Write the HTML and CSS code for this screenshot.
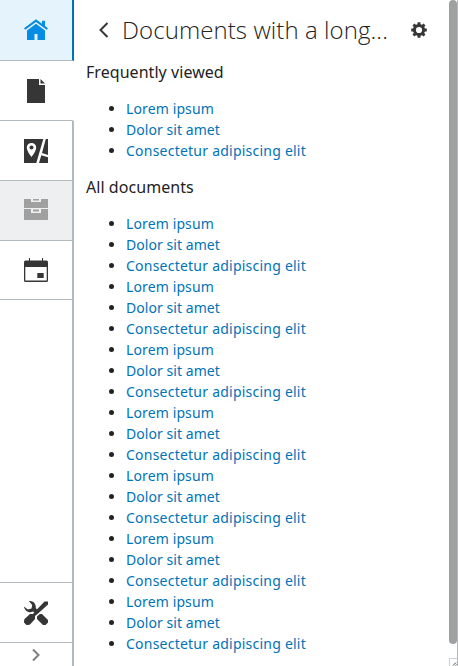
FILE: index.html
```html
<!DOCTYPE html>
<html lang="en">
<head>
<meta charset="utf-8">
<title>Documents</title>
<link rel="stylesheet" href="styles.css">
</head>
<body>
<div class="app">
  <nav class="rail">
    <a class="item item-home"><svg width="24" height="24" viewBox="0 0 24 24"><path d="M0 10.200 12 1.200l6 4.500V2.800h3v5.100l3 2.300-1.300 1.500L12 3.900 1.300 11.700zM12 5.800l9 6.800V22h-7.500v-6h-3v6H3v-9.400z"/></svg></a>
    <a class="item item-active"><svg width="24" height="24" viewBox="0 0 24 24"><path d="M3 0h12v6h6v18H3zM16.500 0 21 4.500h-4.500z"/></svg></a>
    <a class="item"><svg width="24" height="24" viewBox="0 0 24 24"><path d="M0 0h19.300L12.300 24H0zM21.800 0H24v15.900l-6-1.800zM17.300 16.300l6.700 2V24h-9z"/><path class="cut" d="M7.500 4A4.600 4.600 0 0 0 2.800 8.700C2.800 12 7.500 18 7.500 18s4.700-6 4.700-9.300A4.600 4.600 0 0 0 7.500 4z"/><circle cx="7.500" cy="8.600" r="2"/></svg></a>
    <a class="item item-disabled"><svg width="24" height="24" viewBox="0 0 24 24"><path d="M0 0h7v3h10V0h7v9H0zM9 0h6v1.500H9zM0 10h7v4h10v-4h7v11H0zM9 10.500h6v2H9z"/></svg></a>
    <a class="item item-calendar"><svg width="24" height="24" viewBox="0 0 24 24"><path fill-rule="evenodd" d="M5 0h1v2.500h12V0h1v2.500h3.500Q24 2.500 24 4v18.500q0 1.500-1.500 1.500h-21Q0 24 0 22.500V4Q0 2.500 1.500 2.500H5zM1.300 9v13.600h21.400V9zM13.300 15h6.400v5h-6.400z"/></svg></a>
    <div class="spacer"></div>
    <a class="item item-tools"><svg width="24" height="24" viewBox="0 0 24 24"><path d="M24 .500v3L13.500 13 11 15v3l-5 5.500-2 .5H2.500L0 21.500V20l.5-2L6 13h3L10.500 11 20.500.500zM5 .200C9 -.5 12.200 3 11.800 7L13 8.500 10.200 11.300 8.800 10.600C5 12.500.500 10 0 5.500l3.800 3L7.500 7.500 8.200 4zM15.800 13H18l6 6v2.500L21.500 24H19l-6-6v-2.500z"/></svg></a>
    <a class="expand"><svg width="10" height="14" viewBox="0 0 10 14"><path d="m2 1.500 5.500 5.500L2 12.500"/></svg></a>
  </nav>
  <main class="panel">
    <header class="header">
      <svg class="back" width="12" height="18" viewBox="0 0 12 18"><path d="M9.500 2 2.500 9l7 7"/></svg>
      <h1>Documents with a long...</h1>
      <svg class="gear" width="16" height="16" viewBox="-8 -8 16 16"><circle r="4.600"/><g><path id="tooth" d="M-1.600-4.500-1.400-7.800h2.800l.2 3.300zM-1.600 4.500-1.400 7.800h2.800l.2-3.300z"/><use href="#tooth" transform="rotate(45)"/><use href="#tooth" transform="rotate(90)"/><use href="#tooth" transform="rotate(135)"/></g></svg>
    </header>
    <h2>Frequently viewed</h2>
    <ul>
      <li><a>Lorem ipsum</a></li><li><a>Dolor sit amet</a></li><li><a>Consectetur adipiscing elit</a></li>
    </ul>
    <h2>All documents</h2>
    <ul>
      <li><a>Lorem ipsum</a></li><li><a>Dolor sit amet</a></li><li><a>Consectetur adipiscing elit</a></li>
      <li><a>Lorem ipsum</a></li><li><a>Dolor sit amet</a></li><li><a>Consectetur adipiscing elit</a></li>
      <li><a>Lorem ipsum</a></li><li><a>Dolor sit amet</a></li><li><a>Consectetur adipiscing elit</a></li>
      <li><a>Lorem ipsum</a></li><li><a>Dolor sit amet</a></li><li><a>Consectetur adipiscing elit</a></li>
      <li><a>Lorem ipsum</a></li><li><a>Dolor sit amet</a></li><li><a>Consectetur adipiscing elit</a></li>
      <li><a>Lorem ipsum</a></li><li><a>Dolor sit amet</a></li><li><a>Consectetur adipiscing elit</a></li>
      <li><a>Lorem ipsum</a></li><li><a>Dolor sit amet</a></li><li><a>Consectetur adipiscing elit</a></li>
    </ul>
  </main>
  <aside class="scroll">
    <div class="thumb"></div>
    <svg class="grip" width="8" height="8" viewBox="0 0 8 8"><path class="frame" d="M.5 8V.5H8"/><path class="lines" d="M4 7.500l3-3M6.500 7.500l1-1"/></svg>
  </aside>
</div>
</body>
</html>
```
FILE: styles.css
```css
* { box-sizing: border-box; }
body { margin: 0; overflow: hidden; background: #fff; color: #232323; font: 14px/21px "Noto Sans", sans-serif; }
.app { display: flex; height: 666px; }
.rail { flex: 0 0 74px; display: flex; flex-direction: column; }
.item { display: flex; align-items: center; height: 60px; flex: none; padding-left: 24px; border-right: 2px solid #b0babf; border-bottom: 1px solid #b0babf; fill: #363636; }
.item svg { display: block; }
.cut { fill: #fff; }
.item-home { height: 61px; background: #e5f3fd; border-right-color: #0073b7; fill: #058ce5; }
.item-active { border-right-color: transparent; }
.item-disabled { background: #eeeff1; fill: #a0a0a0; }
.item-calendar { height: 59px; }
.spacer { flex: 1; border-right: 2px solid #b0babf; }
.item-tools { height: 61px; border-top: 1px solid #b0babf; }
.expand { height: 23px; padding: 5px 0 0 31px; border-right: 2px solid #b0babf; }
.expand svg { display: block; fill: none; stroke: #808080; stroke-width: 2; }
.panel { width: 375px; padding-left: 12px; overflow: hidden; }
.header { display: flex; align-items: center; height: 60px; padding-left: 12px; }
.back { fill: none; stroke: #363636; stroke-width: 2; }
h1 { width: 267px; margin: 0 0 0 12px; font-family: "Open Sans", "Noto Sans", sans-serif; font-size: 24px; line-height: 36px; font-weight: 300; letter-spacing: .08px; white-space: nowrap; }
.gear { margin-left: 22px; fill: #363636; }
.gear circle { fill: none; stroke: #363636; stroke-width: 3; }
h2 { margin: 0; font-size: 16px; line-height: 24px; font-weight: 400; letter-spacing: .05px; }
ul { margin: 14px 0; padding-left: 40px; }
li { letter-spacing: .12px; }
li:nth-child(3n) { letter-spacing: .23px; }
li:nth-child(3n+2) { letter-spacing: .06px; }
li a { color: #0073b7; }
.scroll { width: 9px; display: flex; flex-direction: column; justify-content: space-between; border-right: 1px solid #b0babf; }
.thumb { width: 8px; height: 644px; border-radius: 4px; background: #a0a0a0; }
.grip { display: block; }
.frame { fill: none; stroke: #d0d0d0; }
.lines { fill: none; stroke: #444; }
```
